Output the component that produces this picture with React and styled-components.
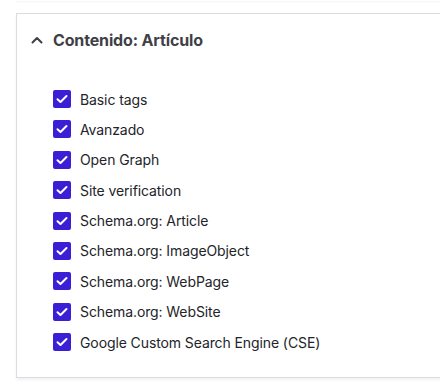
import styled, { createGlobalStyle } from 'styled-components';

const GlobalStyle = createGlobalStyle`
  html, body {
    margin: 0;
    padding: 0;
    background: #ffffff;
    overflow: hidden;
  }
  body {
    font-family: Inter, "Noto Sans", "Liberation Sans", sans-serif;
    -webkit-font-smoothing: antialiased;
  }
`;

const Page = styled.div`
  width: 440px;
  height: 389px;
  overflow: hidden;
  display: flex;
  flex-direction: column;
  background: #fff;
`;

const PrevCard = styled.div`
  margin-left: 16px;
  width: 440px;
  height: 2px;
  margin-top: -1px;
  background: #fff;
  box-shadow: 0 1px 2px rgba(0, 0, 0, 0.05);
`;

const Card = styled.section`
  margin: 12px 0 0 16px;
  width: 440px;
  height: 365px;
  box-sizing: border-box;
  border: 1px solid #dcdbe3;
  border-right: none;
  background: #fff;
  box-shadow: 0 2px 3px rgba(0, 0, 0, 0.06);
  display: flex;
  flex-direction: column;
`;

const Header = styled.div`
  display: flex;
  align-items: center;
  gap: 9px;
  padding: 16px 0 0 13px;
  height: 20px;
`;

const Title = styled.h2`
  margin: 0;
  font-size: 16px;
  font-weight: 700;
  color: #3f3f47;
  letter-spacing: -0.15px;
`;

const List = styled.div`
  display: flex;
  flex-direction: column;
  gap: 12.4px;
  padding: 40px 0 0 36px;
`;

const Row = styled.label`
  display: flex;
  align-items: center;
  gap: 9px;
  height: 18px;
  font-size: 14px;
  letter-spacing: -0.1px;
  color: #232429;
`;

const Box = styled.span`
  width: 18px;
  height: 18px;
  border-radius: 2px;
  background: #3a1fd4;
  display: flex;
  align-items: center;
  justify-content: center;
  flex: none;
`;

const Chevron = () => (
  <svg width="14" height="14" viewBox="0 0 14 14" fill="none">
    <path d="M2.5 9.5 7 5l4.5 4.5" stroke="#3f3f47" strokeWidth="2" strokeLinecap="round" strokeLinejoin="round" />
  </svg>
);

const Check = () => (
  <svg width="12" height="10" viewBox="0 0 12 10" fill="none">
    <path d="M1.5 5.2 4.5 8 10.5 2" stroke="#fff" strokeWidth="2" strokeLinecap="round" strokeLinejoin="round" />
  </svg>
);

const items = [
  'Basic tags',
  'Avanzado',
  'Open Graph',
  'Site verification',
  'Schema.org: Article',
  'Schema.org: ImageObject',
  'Schema.org: WebPage',
  'Schema.org: WebSite',
  'Google Custom Search Engine (CSE)',
];

export default function App() {
  return (
    <Page>
      <GlobalStyle />
      <PrevCard />
      <Card>
        <Header>
          <Chevron />
          <Title>Contenido: Artículo</Title>
        </Header>
        <List>
          {items.map((it) => (
            <Row key={it}>
              <Box>
                <Check />
              </Box>
              {it}
            </Row>
          ))}
        </List>
      </Card>
    </Page>
  );
}
